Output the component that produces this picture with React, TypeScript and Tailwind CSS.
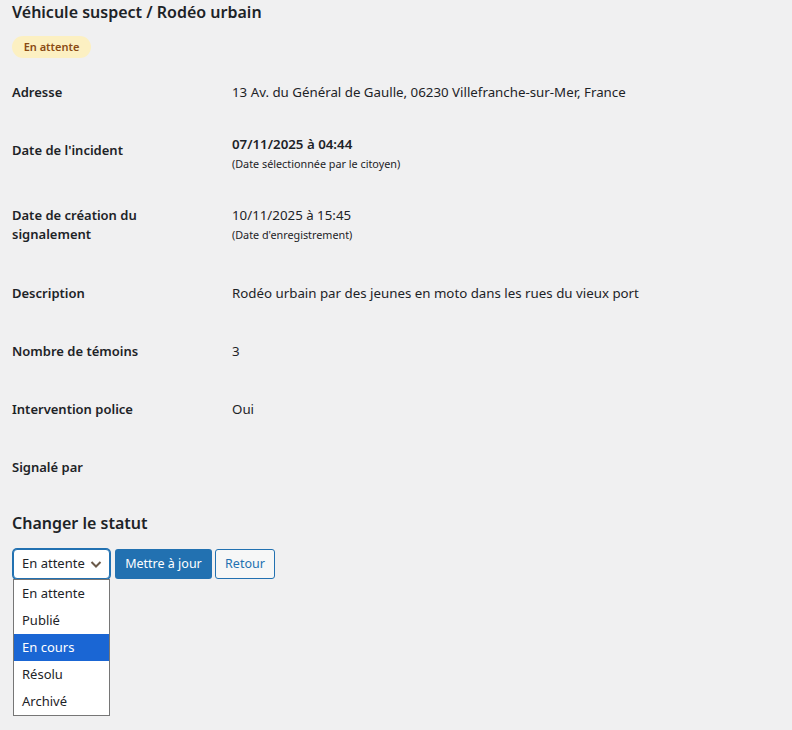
const font = "font-['Segoe_UI','Noto_Sans','Open_Sans',sans-serif]";

type Row = { label: React.ReactNode; value: React.ReactNode; h: string };

const rows: Row[] = [
  {
    label: "Adresse",
    value: "13 Av. du Général de Gaulle, 06230 Villefranche-sur-Mer, France",
    h: "h-[58px]",
  },
  {
    label: "Date de l'incident",
    value: (
      <>
        <strong className="font-semibold">07/11/2025 à 04:44</strong>
        <br />
        <span className="text-[10.8px]">(Date sélectionnée par le citoyen)</span>
      </>
    ),
    h: "h-[65px]",
  },
  {
    label: (
      <>
        Date de création du
        <br />
        signalement
      </>
    ),
    value: (
      <>
        10/11/2025 à 15:45
        <br />
        <span className="text-[10.8px]">(Date d'enregistrement)</span>
      </>
    ),
    h: "h-[78px]",
  },
  {
    label: "Description",
    value: "Rodéo urbain par des jeunes en moto dans les rues du vieux port",
    h: "h-[58px]",
  },
  { label: "Nombre de témoins", value: "3", h: "h-[58px]" },
  { label: "Intervention police", value: "Oui", h: "h-[58px]" },
  { label: "Signalé par", value: "", h: "h-[58px]" },
];

const options = ["En attente", "Publié", "En cours", "Résolu", "Archivé"];

export default function App() {
  return (
    <div className={`min-h-[730px] w-[792px] bg-[#f0f0f1] pl-3 text-[#1d2327] ${font}`}>
      <h1 className="text-[16px] font-semibold leading-[24px]">Véhicule suspect / Rodéo urbain</h1>

      <span className="mt-3 inline-flex h-[22px] w-[79px] items-center justify-center rounded-full bg-[#fcf0c2] text-[11px] font-semibold text-[#8a4a14]">
        En attente
      </span>

      <div className="mt-[5px]">
        {rows.map((row, i) => (
          <div key={i} className={`flex ${row.h}`}>
            <div className="w-[220px] pt-5 text-[13px] font-semibold leading-[19px]">{row.label}</div>
            <div className="flex items-center text-[13.3px] leading-[19px]">
              <div>{row.value}</div>
            </div>
          </div>
        ))}
      </div>

      <h2 className="mt-[15px] text-[16px] font-semibold leading-[24px]">Changer le statut</h2>

      <div className="mt-[14px] ml-px flex gap-[5px] text-[13px]">
        <div className="relative">
          <div className="flex h-[30px] w-[97px] items-center justify-between whitespace-nowrap rounded-[4px] border border-[#2271b1] bg-white pl-[8px] pr-[6px] shadow-[0_0_0_1px_#2271b1]">
            <span>En attente</span>
            <svg width="14" height="14" viewBox="0 0 14 14" fill="none">
              <path d="M2.5 5 L7 9.5 L11.5 5" stroke="#6b5a4a" strokeWidth="2" />
            </svg>
          </div>
          <ul className="absolute left-0 top-full w-[97px] border border-[#767676] bg-white">
            {options.map((o) => (
              <li
                key={o}
                className={`flex h-[27px] items-center pl-[8px] ${o === "En cours" ? "bg-[#1a66d4] text-white" : ""}`}
              >
                {o}
              </li>
            ))}
          </ul>
        </div>
        <button className="h-[30px] w-[97px] rounded-[3px] bg-[#2271b1] text-[12.5px] text-white">Mettre à jour</button>
        <button className="-ml-[2px] h-[30px] w-[60px] rounded-[3px] border border-[#2271b1] bg-[#f6f7f7] text-[12.5px] text-[#2271b1]">
          Retour
        </button>
      </div>
    </div>
  );
}
